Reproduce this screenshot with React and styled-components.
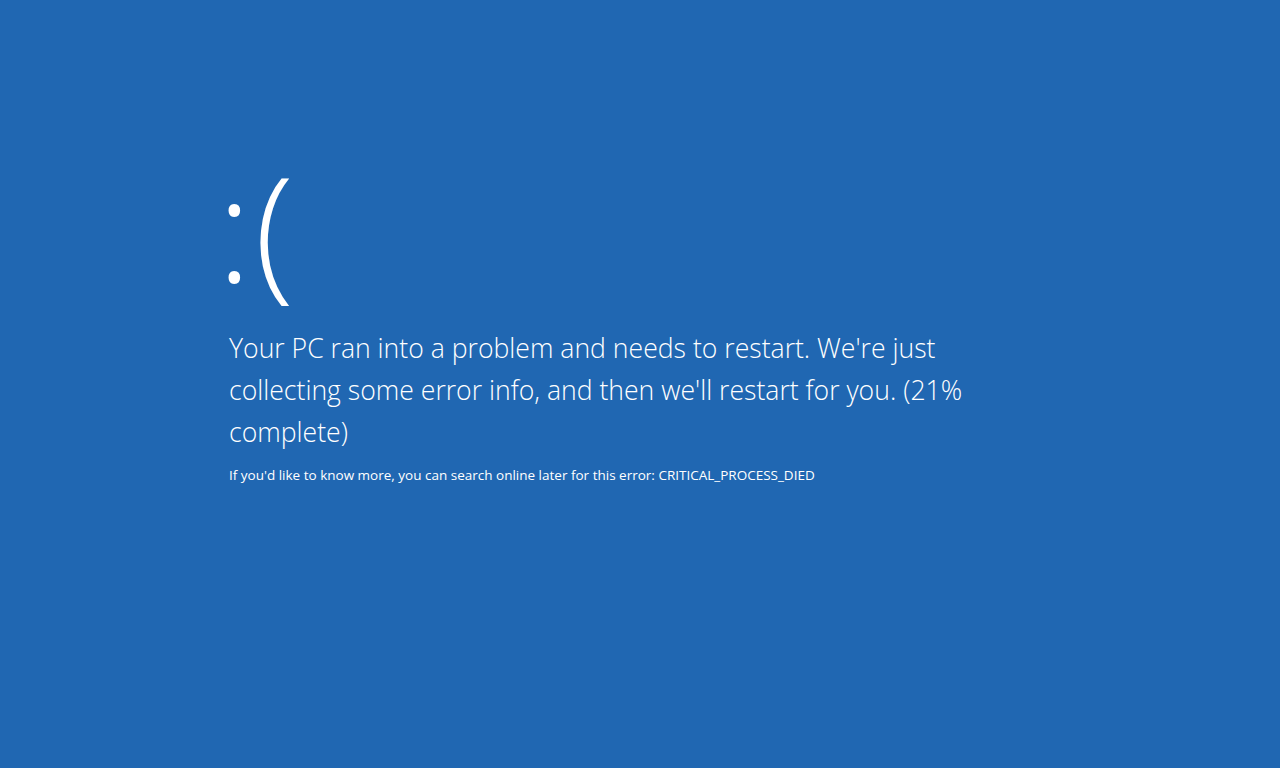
import React from "react";
import styled, { createGlobalStyle } from "styled-components";

const GlobalStyle = createGlobalStyle`
  html, body {
    margin: 0;
    padding: 0;
    background: #2067b2;
  }
`;

const Screen = styled.div`
  width: 1280px;
  height: 768px;
  background: #2067b2;
  color: #ffffff;
  font-family: "Open Sans", "Noto Sans", sans-serif;
  font-weight: 300;
  display: flex;
  flex-direction: column;
  padding: 127px 0 0 229px;
  box-sizing: border-box;
  overflow: hidden;
`;

const Face = styled.div`
  margin-left: -12px;
  font-size: 145px;
  line-height: 200px;
  font-weight: 300;
  letter-spacing: 3px;
`;

const Message = styled.p`
  margin: 0;
  font-size: 26.6px;
  line-height: 42px;
  max-width: 750px;
`;

const Detail = styled.p`
  margin: 13px 0 0;
  font-size: 13.5px;
  line-height: 18px;
  font-weight: 400;
`;

export default function App() {
  return (
    <>
      <GlobalStyle />
      <Screen>
        <Face>:(</Face>
        <Message>
          Your PC ran into a problem and needs to restart. We're just
          collecting some error info, and then we'll restart for you. (21%
          complete)
        </Message>
        <Detail>
          If you'd like to know more, you can search online later for this
          error: CRITICAL_PROCESS_DIED
        </Detail>
      </Screen>
    </>
  );
}
